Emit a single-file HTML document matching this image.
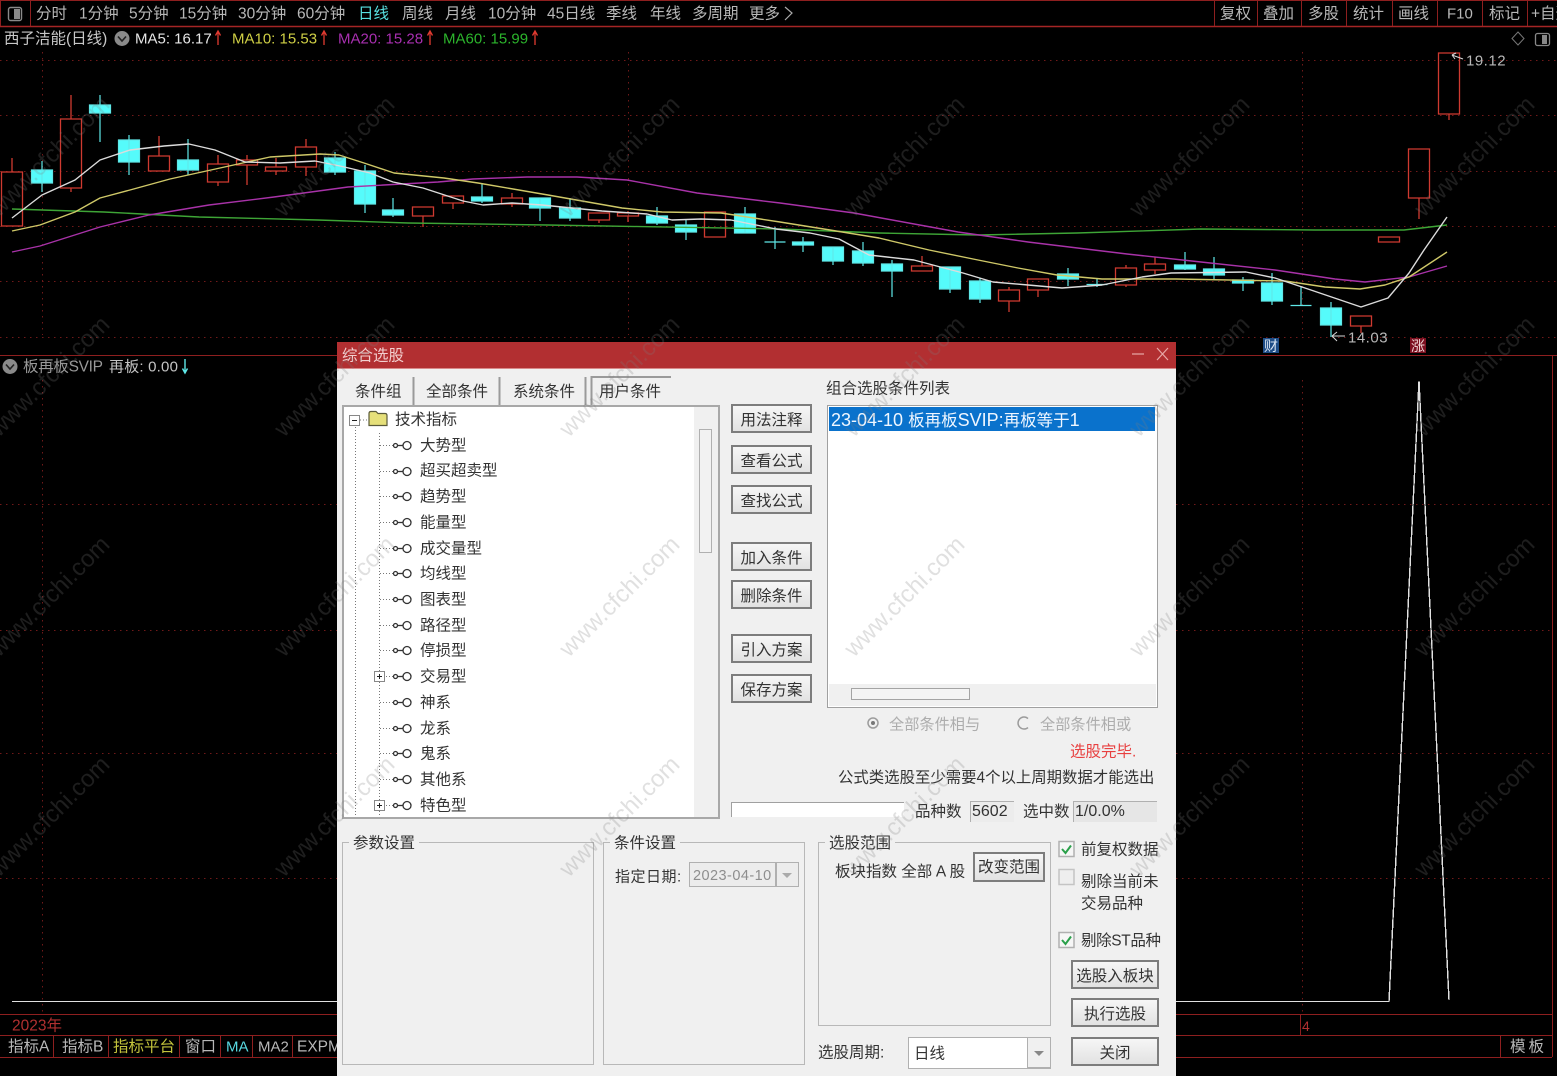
<!DOCTYPE html>
<html lang="zh">
<head>
<meta charset="utf-8">
<title>综合选股</title>
<style>
html,body{margin:0;padding:0;background:#000;}
body{width:1557px;height:1076px;overflow:hidden;position:relative;font-family:"Liberation Sans","Noto Sans CJK SC",sans-serif;}
#wrap{position:absolute;left:0;top:0;width:1557px;height:1076px;filter:blur(.35px);overflow:hidden;}
.t{position:absolute;white-space:nowrap;transform:translateY(calc(-50% + 2px));line-height:1;font-size:15.5px;}
.g{color:#b8b8b8}
.d{color:#333}
.box{position:absolute;box-sizing:border-box;}
svg{position:absolute;left:0;top:0;}
.btn{position:absolute;box-sizing:border-box;border:2px solid #7d7d7d;background:linear-gradient(#f6f6f6,#e2e2e2);color:#333;font-size:15.5px;text-align:center;display:flex;align-items:center;justify-content:center;white-space:nowrap;}
.grp{position:absolute;box-sizing:border-box;border:1.5px solid #b8b8b8;}
.lg{position:absolute;top:-7px;left:6px;background:#f0f0f0;padding:0 4px;font-size:15.5px;line-height:16px;color:#333;white-space:nowrap;}
.wm{position:absolute;font-size:24px;line-height:1;color:rgba(125,125,125,.24);transform:translate(-50%,-50%) rotate(-45deg);white-space:nowrap;font-family:"Liberation Sans",sans-serif;}
</style>
</head>
<body>
<div id="wrap">

<svg width="1557" height="1076" viewBox="0 0 1557 1076" fill="none">
  <!-- dotted grid -->
  <g stroke="#701919" stroke-width="1" stroke-dasharray="1.5 4.5">
    <path d="M0 60.5H1557M0 115.5H1557M0 171.5H1557M0 226.5H1557M0 281.5H1557M0 337.5H1557"/>
    <path d="M0 504.5H1552M0 630.5H1552M0 753.5H1552M0 878.5H1552"/>
    <path d="M42.5 52V335M628.5 52V335M1302.5 52V335M42.5 380V1012M1302.5 380V1012"/>
  </g>
  <!-- frame lines -->
  <g stroke="#8e1f1f" stroke-width="1">
    <path d="M0 26.5H1557" stroke="#a52525" stroke-width="1.5"/>
    <path d="M0 .5H1557M.5 0V26M30.5 0V26"/>
    <path d="M1214.5 0V26M1257.5 0V26M1301.5 0V26M1346.5 0V26M1392.5 0V26M1437.5 0V26M1482.5 0V26M1527.5 0V26"/>
    <path d="M0 355.5H1557M1552.5 355V1057"/>
    <path d="M0 1014.5H1552M0 1035.5H1552M0 1057.5H1552M1300.5 1014V1035M1500.5 1035V1057"/>
    <path d="M53.5 1035V1057M108.5 1035V1057M179.5 1035V1057M220.5 1035V1057M252.5 1035V1057M292.5 1035V1057"/>
  </g>
  <!-- red candles -->
  <g stroke="#cf3a30" stroke-width="1.3">
    <path d="M12 158V172M1.5 172h21v54h-21z"/>
    <path d="M71 95V119M71 188V192M60.500 119h21v69h-21z"/>
    <path d="M159 136V156M148.500 156h21v15h-21z"/>
    <path d="M218 155V164M218 182V186M207.500 164h21v18h-21z"/>
    <path d="M247 155V160M247 165V185M236.500 160h21v5h-21z"/>
    <path d="M276 158V167M276 171V175M265.500 167h21v4h-21z"/>
    <path d="M306 139V147M306 167V176M295.500 147h21v20h-21z"/>
    <path d="M423 216V227M412.500 207h21v9h-21z"/>
    <path d="M453 203V209M442.500 196h21v7h-21z"/>
    <path d="M512 193V198M512 204V207M501.500 198h21v6h-21z"/>
    <path d="M599 220V223M588.500 213h21v7h-21z"/>
    <path d="M628 211V213M628 216V222M617.500 213h21v3h-21z"/>
    <path d="M704.500 212h21v25h-21z"/>
    <path d="M922 256V266M911.500 266h21v5h-21z"/>
    <path d="M1009 287V290M1009 301V312M998.500 290h21v11h-21z"/>
    <path d="M1038 290V297M1027.500 279h21v11h-21z"/>
    <path d="M1126 265V268M1126 285V287M1115.500 268h21v17h-21z"/>
    <path d="M1155 257V264M1155 270V274M1144.500 264h21v6h-21z"/>
    <path d="M1361 326V333M1350.500 316h21v10h-21z"/>
    <path d="M1378.500 237h21v5h-21z"/>
    <path d="M1419 198V219M1408.500 149h21v49h-21z"/>
    <path d="M1449 114V120M1438.500 53h21v61h-21z"/>
  </g>
  <!-- cyan candles -->
  <g stroke="#5fe8e8" stroke-width="1.2" fill="#55fbfb">
    <path d="M42 161V192M31.500 170h21v13h-21z"/>
    <path d="M100 95V142M89.500 105h21v8h-21z"/>
    <path d="M129 135V175M118.500 140h21v22h-21z"/>
    <path d="M188 139V175M177.500 160h21v10h-21z"/>
    <path d="M335 152V175M324.500 158h21v14h-21z"/>
    <path d="M365 165V213M354.500 171h21v33h-21z"/>
    <path d="M393 198V217M382.500 210h21v5h-21z"/>
    <path d="M482 183V203M471.500 197h21v4h-21z"/>
    <path d="M540 198V221M529.500 198h21v10h-21z"/>
    <path d="M570 198V221M559.500 208h21v10h-21z"/>
    <path d="M657 207V225M646.500 216h21v7h-21z"/>
    <path d="M686 219V240M675.500 225h21v7h-21z"/>
    <path d="M745 207V233M734.500 214h21v19h-21z"/>
    <path d="M775 227V249M764.500 242h21"/>
    <path d="M803 237V252M792.500 242h21v3h-21z"/>
    <path d="M833 247V265M822.500 247h21v14h-21z"/>
    <path d="M863 242V266M852.500 251h21v12h-21z"/>
    <path d="M892 260V297M881.500 264h21v7h-21z"/>
    <path d="M950 267V293M939.500 267h21v22h-21z"/>
    <path d="M980 278V303M969.500 281h21v18h-21z"/>
    <path d="M1068 268V286M1057.500 274h21v5h-21z"/>
    <path d="M1097 278V287M1086.500 284.500h21"/>
    <path d="M1185 252V270M1174.500 265h21v4h-21z"/>
    <path d="M1214 257V279M1203.500 269h21v6h-21z"/>
    <path d="M1243 277V291M1232.500 280h21v3h-21z"/>
    <path d="M1272 273V305M1261.500 283h21v18h-21z"/>
    <path d="M1301 286V306M1290.500 305.500h21"/>
    <path d="M1331 302V337M1320.500 308h21v17h-21z"/>
  </g>
  <!-- MA lines -->
  <g stroke-width="1.4" stroke-linejoin="round">
    <polyline stroke="#3ea536" points="12,209 104,212 199,217 318,220 408,223 547,225 780,229 879,233 978,235 1077,233 1201,229 1315,230 1404,230 1447,225"/>
    <polyline stroke="#a832a8" points="12,252 40,246 100,227 149,215 209,205 274,197 348,187 438,182 473,179 527,177 577,177 627,180 697,193 780,203 854,213 958,232 1028,242 1127,254 1201,262 1275,270 1335,279 1365,282 1409,277 1447,266"/>
    <polyline stroke="#cfc868" points="12,231 40,225 75,212 100,198 130,190 170,179 220,168 270,157 320,154 339,155 364,163 394,173 444,178 478,183 548,195 622,208 662,212 721,213 780,222 830,230 879,238 929,250 978,260 1018,268 1057,275 1102,279 1176,279 1285,281 1325,287 1360,289 1385,285 1409,277 1447,252"/>
    <polyline stroke="#dcdcdc" points="12,218 42,195 75,180 100,160 130,150 164,146 189,144 215,150 245,162 280,163 315,161 340,166 370,173 393,182 423,188 463,201 483,205 512,203 542,205 572,208 602,211 647,214 672,220 701,219 731,220 776,229 810,233 839,239 869,255 914,260 963,273 993,282 1028,285 1062,288 1102,285 1142,277 1171,273 1246,272 1275,278 1305,288 1361,307 1388,298 1409,273 1424,250 1447,217"/>
  </g>
  <!-- lower indicator -->
  <g stroke="#e0e0e0" stroke-width="1.4" shape-rendering="crispEdges">
    <path d="M12 1001.500H1389L1419 381L1449 1000"/>
  </g>
  <!-- high/low markers -->
  <g stroke="#d8d8d8" stroke-width="1">
    <path d="M1463 59L1452 55M1452 55L1456 53M1452 55L1455 59"/>
    <path d="M1345 336H1332M1332 336L1337 332M1332 336L1337 341"/>
  </g>
  <!-- left/top icon -->
  <g>
    <rect x="8.500" y="7.500" width="13" height="13" rx="2" stroke="#8a8a8a" stroke-width="1.400"/>
    <rect x="14" y="9" width="6" height="10" fill="#8a8a8a"/>
    <path d="M1518 32L1524 38.500L1518 45L1512 38.500Z" stroke="#777"/>
    <rect x="1535.500" y="33.500" width="14" height="12" rx="2" stroke="#888" stroke-width="1.300"/>
    <rect x="1542" y="35" width="5" height="9" fill="#888"/>
    <path d="M785 7L792 13L785 20" stroke="#aaa" stroke-width="1.200"/>
    <!-- dropdown circles -->
    <circle cx="122" cy="38.500" r="7.500" fill="#8a8a8a"/>
    <path d="M118 36.500L122 41L126 36.500" stroke="#222" stroke-width="1.600"/>
    <circle cx="10" cy="366.500" r="7.500" fill="#8a8a8a"/>
    <path d="M6 364.500L10 369L14 364.500" stroke="#222" stroke-width="1.600"/>
    <!-- up arrows -->
    <g stroke="#e03a30" stroke-width="1.300">
      <path d="M218 45V31M215.500 35.500L218 31L220.500 35.500"/>
      <path d="M324 45V31M321.500 35.500L324 31L326.500 35.500"/>
      <path d="M430 45V31M427.500 35.500L430 31L432.500 35.500"/>
      <path d="M535 45V31M532.500 35.500L535 31L537.500 35.500"/>
    </g>
    <path d="M185 359V373M182.500 368.500L185 373L187.500 368.500" stroke="#5fe8e8" stroke-width="1.400"/>
  </g>
  <rect x="1263" y="338" width="16" height="15" fill="#1d4c86"/>
  <rect x="1410" y="338" width="16" height="15" fill="#7c1020"/>
</svg>

<!-- top bar text -->
<span class="t g" style="left:36px;top:12px">分时</span>
<span class="t g" style="left:79px;top:12px">1分钟</span>
<span class="t g" style="left:129px;top:12px">5分钟</span>
<span class="t g" style="left:179px;top:12px">15分钟</span>
<span class="t g" style="left:238px;top:12px">30分钟</span>
<span class="t g" style="left:297px;top:12px">60分钟</span>
<span class="t" style="left:358px;top:12px;color:#58e0e0">日线</span>
<span class="t g" style="left:402px;top:12px">周线</span>
<span class="t g" style="left:445px;top:12px">月线</span>
<span class="t g" style="left:488px;top:12px">10分钟</span>
<span class="t g" style="left:547px;top:12px">45日线</span>
<span class="t g" style="left:606px;top:12px">季线</span>
<span class="t g" style="left:650px;top:12px">年线</span>
<span class="t g" style="left:692px;top:12px">多周期</span>
<span class="t g" style="left:749px;top:12px">更多</span>
<span class="t g" style="left:1220px;top:12px">复权</span>
<span class="t g" style="left:1263px;top:12px">叠加</span>
<span class="t g" style="left:1308px;top:12px">多股</span>
<span class="t g" style="left:1353px;top:12px">统计</span>
<span class="t g" style="left:1398px;top:12px">画线</span>
<span class="t g" style="left:1447px;top:12px;font-size:15px">F10</span>
<span class="t g" style="left:1489px;top:12px">标记</span>
<span class="t g" style="left:1531px;top:12px">+自选</span>

<!-- info row -->
<span class="t" style="left:4px;top:37px;color:#c8c8c8">西子洁能(日线)</span>
<span class="t" style="left:135px;top:37px;color:#e6e6e6;font-size:15px">MA5: 16.17</span>
<span class="t" style="left:232px;top:37px;color:#cfcf45;font-size:15px">MA10: 15.53</span>
<span class="t" style="left:338px;top:37px;color:#a82fb0;font-size:15px">MA20: 15.28</span>
<span class="t" style="left:443px;top:37px;color:#2cb52c;font-size:15px">MA60: 15.99</span>
<span class="t" style="left:1466px;top:59px;color:#b8b8b8;font-size:15px;letter-spacing:.5px">19.12</span>
<span class="t" style="left:1348px;top:336px;color:#b8b8b8;font-size:15px;letter-spacing:.5px">14.03</span>
<span class="t" style="left:1264px;top:344px;color:#d8e4f2;font-size:14px">财</span>
<span class="t" style="left:1411px;top:344px;color:#f2d8d8;font-size:14px">涨</span>
<span class="t g" style="left:23px;top:365px;color:#999;letter-spacing:-.3px">板再板SVIP</span>
<span class="t" style="left:109px;top:365px;color:#c4c4c4;font-size:15px;letter-spacing:.2px">再板: 0.00</span>

<!-- bottom -->
<span class="t" style="left:12px;top:1024px;color:#b03030;font-size:15.5px">2023年</span>
<span class="t" style="left:1302px;top:1024px;color:#b03030;font-size:14px">4</span>
<span class="t g" style="left:8px;top:1045px">指标A</span>
<span class="t g" style="left:62px;top:1045px">指标B</span>
<span class="t" style="left:113px;top:1045px;color:#c4c43c">指标平台</span>
<span class="t g" style="left:185px;top:1045px">窗口</span>
<span class="t" style="left:226px;top:1045px;color:#58d8e0;font-size:15px">MA</span>
<span class="t g" style="left:258px;top:1045px;font-size:15px">MA2</span>
<span class="t g" style="left:297px;top:1045px">EXPM</span>
<span class="t g" style="left:1510px;top:1045px;letter-spacing:3px">模板</span>

<!-- dialog -->
<div class="box" style="left:337px;top:342px;width:839px;height:734px;background:#f0f0f0;overflow:hidden;">
  <div class="box" style="left:0;top:0;width:839px;height:27px;background:#b22f31;border-bottom:1px solid #d88a8a"></div>
</div>
<span class="t" style="left:342px;top:354px;color:#f3cfcf;font-size:15.5px">综合选股</span>
<svg width="1557" height="1076" viewBox="0 0 1557 1076" fill="none" style="pointer-events:none">
  <path d="M1132 354H1144" stroke="#e8a8a8" stroke-width="1.200"/>
  <path d="M1157 348L1168 360M1168 348L1157 360" stroke="#e8a8a8" stroke-width="1.200"/>
  <path d="M413.500 377V405M499.500 377V405M585.500 377V405" stroke="#9a9a9a" stroke-width="2"/>
  <path d="M591.500 405V377H671" stroke="#9a9a9a" stroke-width="2"/>
</svg>

<span class="t d" style="left:355px;top:390px">条件组</span>
<span class="t d" style="left:426px;top:390px">全部条件</span>
<span class="t d" style="left:513px;top:390px">系统条件</span>
<span class="t d" style="left:599px;top:390px">用户条件</span>

<!-- tree box -->
<div class="box" style="left:342px;top:405px;width:378px;height:414px;background:#fff;border:2px solid #a8a8a8;"></div>
<div class="box" style="left:694px;top:407px;width:24px;height:410px;background:#f0f0f0"></div>
<div class="box" style="left:699px;top:429px;width:13px;height:124px;background:#f2f2f2;border:1.500px solid #b0b0b0"></div>
<svg width="1557" height="1076" viewBox="0 0 1557 1076" fill="none">
  <defs>
    <g id="key" stroke="#333" stroke-width="1.300">
      <circle cx="5.500" cy="0.500" r="2" fill="#fff"/>
      <path d="M7.500 .5H14"/>
      <circle cx="17" cy="0.500" r="4" fill="#fff"/>
    </g>
  </defs>
  <g stroke="#777" stroke-width="1" stroke-dasharray="1 2">
    <path d="M355.500 427V817M379.500 433V817"/>
    <path d="M360 420H368"/>
    <path d="M380 445.500H393M380 471.500H393M380 496.500H393M380 522.500H393M380 548.500H393M380 573.500H393M380 599.500H393M380 625.500H393M380 650.500H393M386 676.500H393M380 702.500H393M380 728.500H393M380 753.500H393M380 779.500H393M386 805.500H393"/>
  </g>
  <use href="#key" x="390" y="445"/>
  <use href="#key" x="390" y="471"/>
  <use href="#key" x="390" y="496"/>
  <use href="#key" x="390" y="522"/>
  <use href="#key" x="390" y="548"/>
  <use href="#key" x="390" y="573"/>
  <use href="#key" x="390" y="599"/>
  <use href="#key" x="390" y="625"/>
  <use href="#key" x="390" y="650"/>
  <use href="#key" x="390" y="676"/>
  <use href="#key" x="390" y="702"/>
  <use href="#key" x="390" y="728"/>
  <use href="#key" x="390" y="753"/>
  <use href="#key" x="390" y="779"/>
  <use href="#key" x="390" y="805"/>
  <!-- expanders -->
  <rect x="349.500" y="415.500" width="10" height="10" fill="#fff" stroke="#888"/>
  <path d="M352 420.500H357" stroke="#222"/>
  <rect x="374.500" y="671.500" width="10" height="10" fill="#fff" stroke="#888"/>
  <path d="M377 676.500H382M379.500 674V679" stroke="#222"/>
  <rect x="374.500" y="800.500" width="10" height="10" fill="#fff" stroke="#888"/>
  <path d="M377 805.500H382M379.500 803V808" stroke="#222"/>
  <!-- folder -->
  <path d="M369 425.500V413.500Q369 411.500 371 411.500H376L378 413.500H385Q387 413.500 387 415.500V425.500Z" fill="#e6e07a" stroke="#5a5a3a" stroke-width="1.200"/>
</svg>
<span class="t d" style="left:395px;top:418px">技术指标</span>
<span class="t d" style="left:420px;top:444px">大势型</span>
<span class="t d" style="left:420px;top:469px">超买超卖型</span>
<span class="t d" style="left:420px;top:495px">趋势型</span>
<span class="t d" style="left:420px;top:521px">能量型</span>
<span class="t d" style="left:420px;top:547px">成交量型</span>
<span class="t d" style="left:420px;top:572px">均线型</span>
<span class="t d" style="left:420px;top:598px">图表型</span>
<span class="t d" style="left:420px;top:624px">路径型</span>
<span class="t d" style="left:420px;top:649px">停损型</span>
<span class="t d" style="left:420px;top:675px">交易型</span>
<span class="t d" style="left:420px;top:701px">神系</span>
<span class="t d" style="left:420px;top:727px">龙系</span>
<span class="t d" style="left:420px;top:752px">鬼系</span>
<span class="t d" style="left:420px;top:778px">其他系</span>
<span class="t d" style="left:420px;top:804px">特色型</span>

<!-- middle buttons -->
<div class="btn" style="left:731px;top:404px;width:81px;height:29px">用法注释</div>
<div class="btn" style="left:731px;top:445px;width:81px;height:29px">查看公式</div>
<div class="btn" style="left:731px;top:485px;width:81px;height:29px">查找公式</div>
<div class="btn" style="left:731px;top:542px;width:81px;height:29px">加入条件</div>
<div class="btn" style="left:731px;top:580px;width:81px;height:29px">删除条件</div>
<div class="btn" style="left:731px;top:634px;width:81px;height:29px">引入方案</div>
<div class="btn" style="left:731px;top:674px;width:81px;height:29px">保存方案</div>

<!-- list -->
<span class="t d" style="left:826px;top:387px">组合选股条件列表</span>
<div class="box" style="left:827px;top:405px;width:331px;height:303px;background:#fff;border:1.500px solid #a0a0a0;"></div>
<div class="box" style="left:829px;top:407px;width:326px;height:24px;background:#0a72cc;"></div>
<span class="t" style="left:831px;top:418px;color:#eef6ff;font-size:18px">23-04-10 <span style="font-size:16.500px">板再板</span>SVIP:<span style="font-size:16.500px">再板等于</span>1</span>
<div class="box" style="left:829px;top:684px;width:327px;height:22px;background:#f0f0f0"></div>
<div class="box" style="left:851px;top:688px;width:119px;height:12px;background:#f4f4f4;border:1.500px solid #a4a4a4"></div>

<!-- radios -->
<svg width="1557" height="1076" viewBox="0 0 1557 1076" fill="none">
  <circle cx="873" cy="723" r="5" stroke="#9c9c9c" stroke-width="1.500"/>
  <circle cx="873" cy="723" r="2" fill="#777"/>
  <path d="M1028 718.500A6 6 0 1 0 1028 727.500" stroke="#9c9c9c" stroke-width="1.500"/>
</svg>
<span class="t" style="left:889px;top:723px;color:#adadad;font-size:15.200px">全部条件相与</span>
<span class="t" style="left:1040px;top:723px;color:#adadad;font-size:15.200px">全部条件相或</span>
<span class="t" style="left:1070px;top:750px;color:#e84040;font-size:15.500px">选股完毕.</span>
<span class="t d" style="left:838px;top:776px;font-size:15.400px">公式类选股至少需要4个以上周期数据才能选出</span>

<!-- progress row -->
<div class="box" style="left:731px;top:802px;width:173px;height:15px;background:#fff;border-left:1.500px solid #a0a0a0;border-top:1.500px solid #a0a0a0"></div>
<span class="t d" style="left:915px;top:810px">品种数</span>
<div class="box" style="left:970px;top:801px;width:44px;height:21px;border-left:1.500px solid #b0b0b0;border-top:1.500px solid #b0b0b0;background:#ececec"></div>
<span class="t d" style="left:972px;top:810px;font-size:16px">5602</span>
<span class="t d" style="left:1023px;top:810px">选中数</span>
<div class="box" style="left:1073px;top:801px;width:84px;height:21px;border-left:1.500px solid #b0b0b0;border-top:1.500px solid #b0b0b0;background:#e6e6e6"></div>
<span class="t d" style="left:1075px;top:810px;font-size:16px">1/0.0%</span>

<!-- group boxes -->
<div class="grp" style="left:342px;top:842px;width:252px;height:223px"><span class="lg">参数设置</span></div>
<div class="grp" style="left:603px;top:842px;width:202px;height:223px"><span class="lg">条件设置</span></div>
<div class="grp" style="left:818px;top:842px;width:233px;height:184px"><span class="lg">选股范围</span></div>

<span class="t d" style="left:615px;top:875px;font-size:15px;letter-spacing:.5px">指定日期:</span>
<div class="box" style="left:689px;top:862px;width:110px;height:25px;background:#ececec;border:1.500px solid #b0b0b0"></div>
<div class="box" style="left:775px;top:863px;width:1.500px;height:23px;background:#b0b0b0"></div>
<span class="t" style="left:693px;top:874px;color:#8e8e8e;font-size:14.500px;letter-spacing:.45px">2023-04-10</span>
<svg width="1557" height="1076" viewBox="0 0 1557 1076">
  <path d="M782 873H792L787 878Z" fill="#aaa"/>
</svg>

<span class="t d" style="left:835px;top:870px">板块指数 全部<span style="margin:0 3.500px">A</span>股</span>
<div class="btn" style="left:973px;top:852px;width:72px;height:30px;padding-bottom:3px">改变范围</div>

<!-- checkboxes -->
<svg width="1557" height="1076" viewBox="0 0 1557 1076" fill="none">
  <rect x="1059" y="841.500" width="15" height="15" fill="#f6f6f6" stroke="#b0b0b0" stroke-width="1.500"/>
  <path d="M1062 849L1065.500 853L1071 845.500" stroke="#2aa04a" stroke-width="2"/>
  <rect x="1059" y="869.500" width="15" height="15" fill="#eeeeee" stroke="#c4c4c4" stroke-width="1.500"/>
  <rect x="1059" y="932.500" width="15" height="15" fill="#f6f6f6" stroke="#b0b0b0" stroke-width="1.500"/>
  <path d="M1062 940L1065.500 944L1071 936.500" stroke="#2aa04a" stroke-width="2"/>
</svg>
<span class="t d" style="left:1081px;top:848px">前复权数据</span>
<span class="t d" style="left:1081px;top:880px">剔除当前未</span>
<span class="t d" style="left:1081px;top:902px">交易品种</span>
<span class="t d" style="left:1081px;top:939px;letter-spacing:-.35px">剔除ST品种</span>
<div class="btn" style="left:1071px;top:960px;width:88px;height:29px">选股入板块</div>
<div class="btn" style="left:1071px;top:998px;width:88px;height:29px">执行选股</div>
<div class="btn" style="left:1071px;top:1037px;width:88px;height:29px">关闭</div>

<span class="t d" style="left:818px;top:1051px">选股周期:</span>
<div class="box" style="left:908px;top:1037px;width:143px;height:32px;background:#fff;border:1.500px solid #b0b0b0;"></div>
<div class="box" style="left:1027px;top:1038px;width:24px;height:30px;background:#f0f0f0;border-left:1.500px solid #b0b0b0;border-right:1.500px solid #b0b0b0;border-bottom:1.500px solid #b0b0b0"></div>
<svg width="1557" height="1076" viewBox="0 0 1557 1076"><path d="M1034 1051H1044L1039 1056Z" fill="#888"/></svg>
<span class="t d" style="left:914px;top:1052px">日线</span>

<!-- watermark -->
<div style="position:absolute;left:0;top:0;width:1557px;height:1076px;pointer-events:none;overflow:hidden">
  <span class="wm" style="left:50px;top:157px">www.cfchi.com</span><span class="wm" style="left:335px;top:157px">www.cfchi.com</span><span class="wm" style="left:620px;top:157px">www.cfchi.com</span><span class="wm" style="left:905px;top:157px">www.cfchi.com</span><span class="wm" style="left:1190px;top:157px">www.cfchi.com</span><span class="wm" style="left:1475px;top:157px">www.cfchi.com</span>
  <span class="wm" style="left:50px;top:377px">www.cfchi.com</span><span class="wm" style="left:335px;top:377px">www.cfchi.com</span><span class="wm" style="left:620px;top:377px">www.cfchi.com</span><span class="wm" style="left:905px;top:377px">www.cfchi.com</span><span class="wm" style="left:1190px;top:377px">www.cfchi.com</span><span class="wm" style="left:1475px;top:377px">www.cfchi.com</span>
  <span class="wm" style="left:50px;top:597px">www.cfchi.com</span><span class="wm" style="left:335px;top:597px">www.cfchi.com</span><span class="wm" style="left:620px;top:597px">www.cfchi.com</span><span class="wm" style="left:905px;top:597px">www.cfchi.com</span><span class="wm" style="left:1190px;top:597px">www.cfchi.com</span><span class="wm" style="left:1475px;top:597px">www.cfchi.com</span>
  <span class="wm" style="left:50px;top:817px">www.cfchi.com</span><span class="wm" style="left:335px;top:817px">www.cfchi.com</span><span class="wm" style="left:620px;top:817px">www.cfchi.com</span><span class="wm" style="left:905px;top:817px">www.cfchi.com</span><span class="wm" style="left:1190px;top:817px">www.cfchi.com</span><span class="wm" style="left:1475px;top:817px">www.cfchi.com</span>
</div>

</div>
</body>
</html>
